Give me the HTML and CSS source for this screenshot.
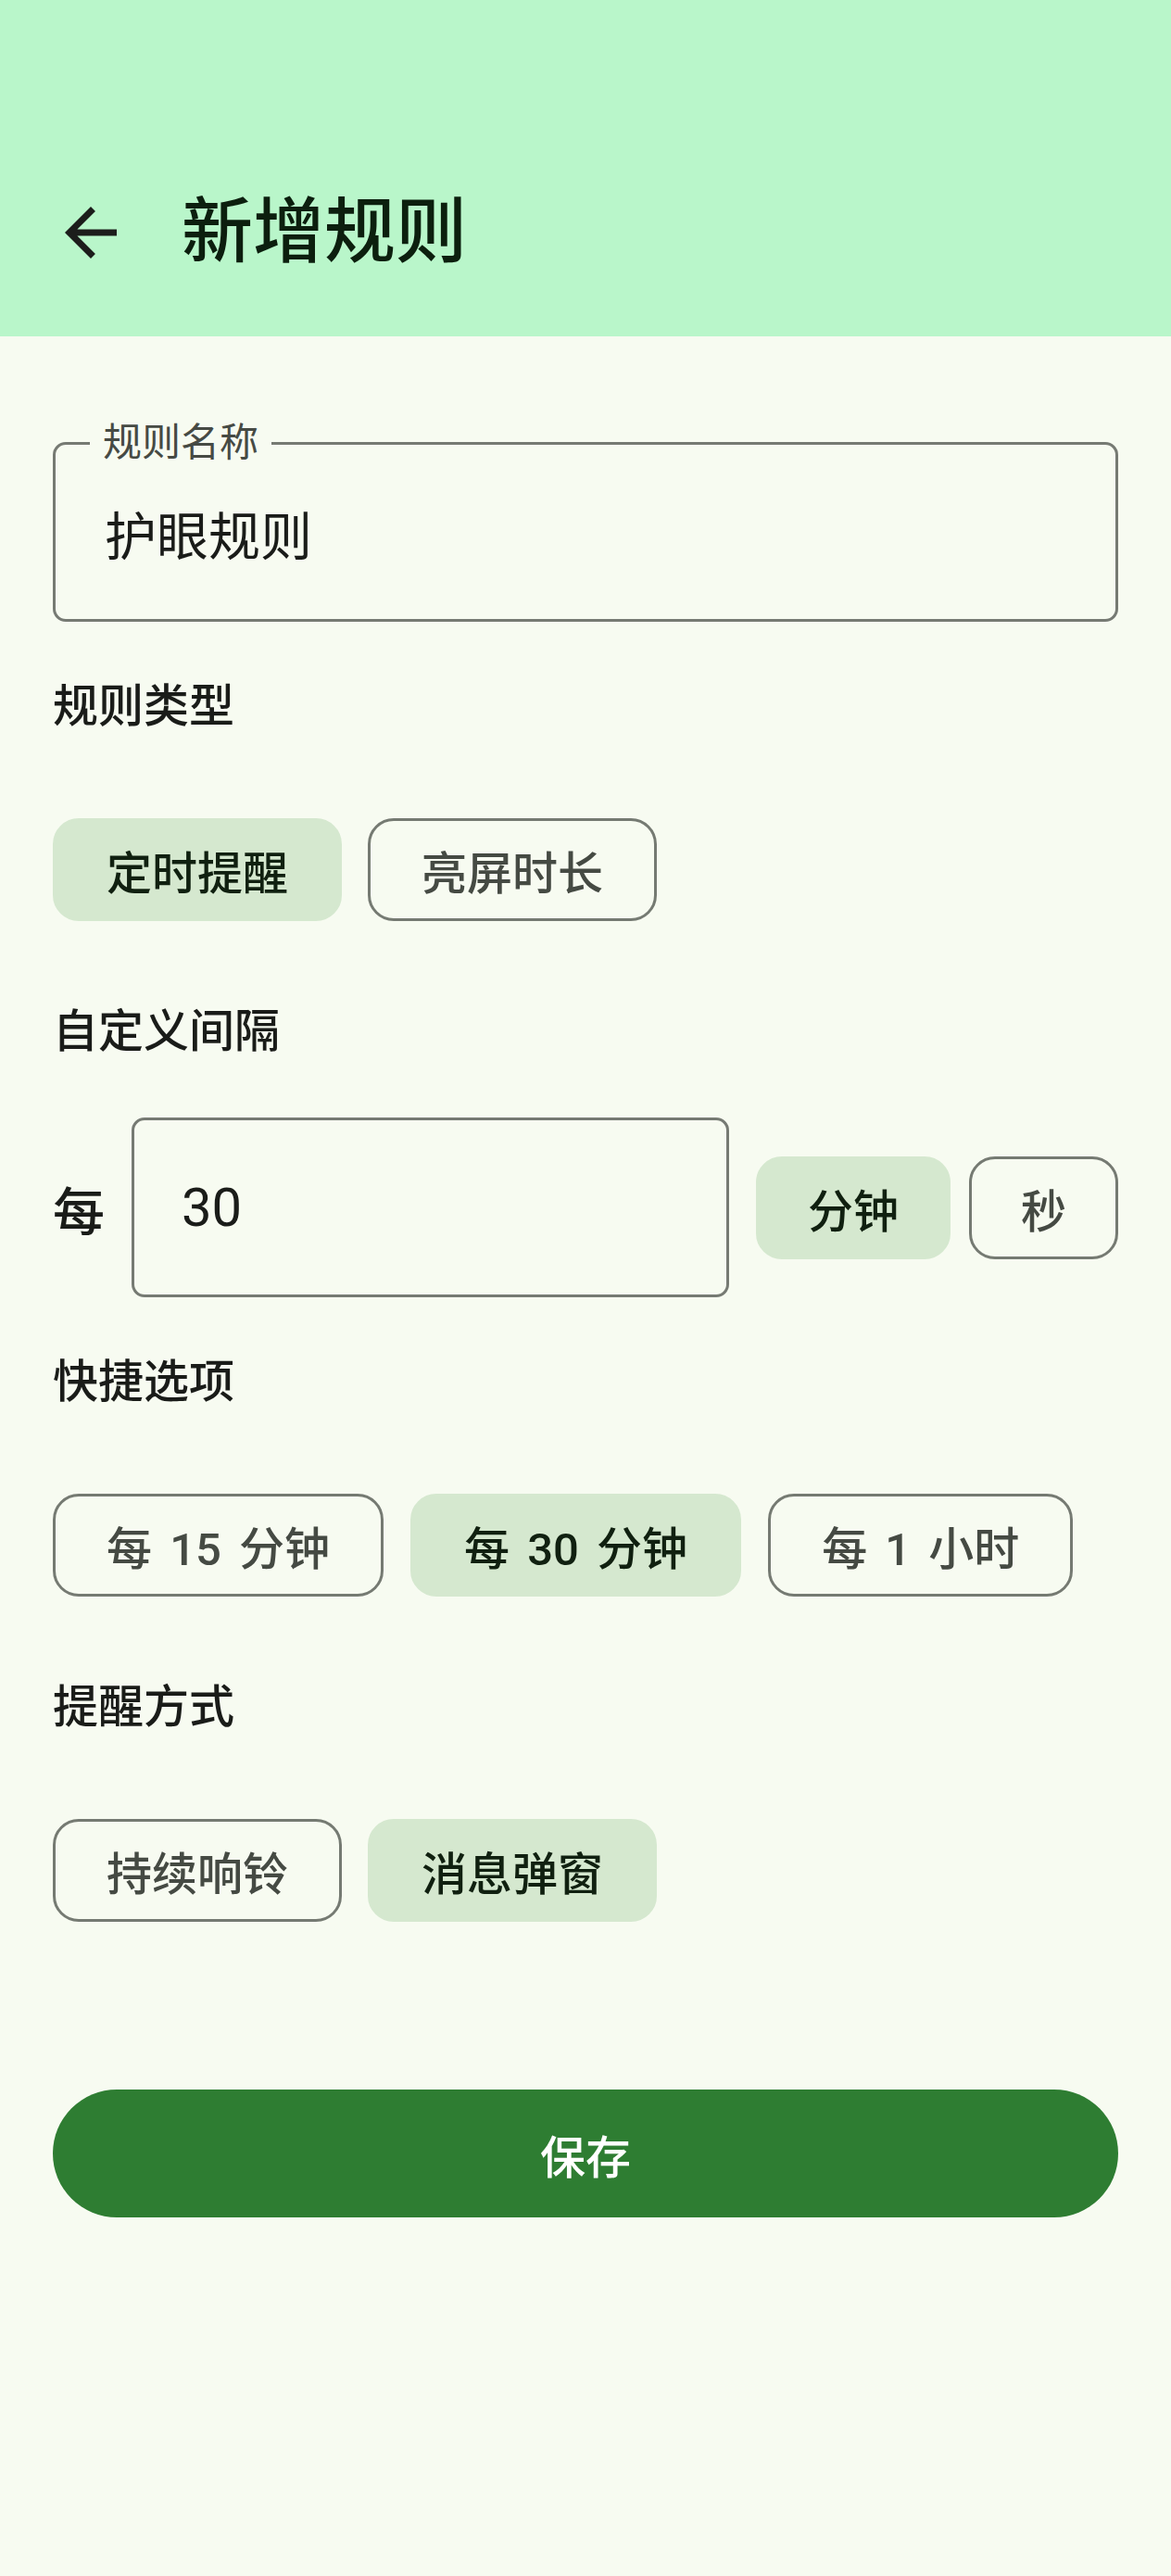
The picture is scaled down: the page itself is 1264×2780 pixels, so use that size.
FILE: index.html
```html
<!DOCTYPE html>
<html lang="zh-CN">
<head>
<meta charset="utf-8">
<title>新增规则</title>
<link rel="stylesheet" href="styles.css">
</head>
<body>
<div class="screen">
  <header class="topbar">
    <div class="statusbar"></div>
    <div class="appbar">
      <button class="nav-btn" aria-label="返回">
        <svg viewBox="0 0 24 24" width="84" height="84" aria-hidden="true">
          <path d="M20 11H7.83l5.59-5.59L12 4l-8 8 8 8 1.41-1.41L7.83 13H20v-2z" fill="currentColor"/>
        </svg>
      </button>
      <h1 class="title">新增规则</h1>
    </div>
  </header>

  <main class="content">
    <div class="outlined name-field">
      <span class="float-label">规则名称</span>
      <span class="field-text">护眼规则</span>
    </div>

    <div class="section-label">规则类型</div>
    <div class="chip-row">
      <span class="chip selected">定时提醒</span>
      <span class="chip">亮屏时长</span>
    </div>

    <div class="section-label">自定义间隔</div>
    <div class="interval-row">
      <span class="every">每</span>
      <div class="outlined number-field">
        <span class="field-text num">30</span>
      </div>
      <span class="chip selected unit unit-min">分钟</span>
      <span class="chip unit unit-sec">秒</span>
    </div>

    <div class="section-label">快捷选项</div>
    <div class="chip-row quick">
      <span class="chip">每 15 分钟</span>
      <span class="chip selected">每 30 分钟</span>
      <span class="chip">每 1 小时</span>
    </div>

    <div class="section-label">提醒方式</div>
    <div class="chip-row">
      <span class="chip">持续响铃</span>
      <span class="chip selected">消息弹窗</span>
    </div>

    <button class="save-btn">保存</button>
  </main>
</div>
</body>
</html>
```

FILE: styles.css
```css
html, body {
  margin: 0;
  padding: 0;
  background: #f7fbf1;
}

body {
  font-family: Roboto, "Noto Sans CJK SC", "Noto Sans", sans-serif;
  color: #1a1c19;
}

.screen {
  width: 1264px;
  min-height: 2780px;
  background: #f7fbf1;
}

/* ---------- top bar ---------- */
.topbar {
  background: #b9f6ca;
  height: 363px;
  display: flex;
  flex-direction: column;
}

.statusbar {
  height: 138px;
}

.appbar {
  height: 225px;
  display: flex;
  align-items: center;
}

.nav-btn {
  margin-left: 56px;
  width: 84px;
  height: 84px;
  padding: 0;
  border: 0;
  background: transparent;
  color: #1c1d1b;
  display: flex;
  align-items: center;
  justify-content: center;
}

.nav-btn svg {
  display: block;
}

.title {
  margin: 0 0 0 56px;
  font-size: 77px;
  font-weight: 500;
  line-height: 100px;
  color: #0c1f0e;
}

/* ---------- content ---------- */
.content {
  padding: 114px 57px 0;
  display: flex;
  flex-direction: column;
  gap: 57px;
}

.outlined {
  position: relative;
  box-sizing: border-box;
  height: 194px;
  border: 3px solid #767a73;
  border-radius: 14px;
  display: flex;
  align-items: center;
}

.float-label {
  position: absolute;
  top: -27px;
  left: 37px;
  padding: 0 14px;
  background: #f7fbf1;
  font-size: 42px;
  line-height: 50px;
  color: #464a44;
}

.field-text {
  font-size: 56px;
  color: #1a1c19;
}

.field-text.num {
  font-size: 58px;
}

.name-field {
  padding-left: 53px;
}

.section-label {
  height: 70px;
  line-height: 70px;
  font-size: 49px;
  font-weight: 500;
  color: #1a1c19;
}

.chip-row {
  display: flex;
  align-items: center;
  gap: 28px;
  padding: 28px 0;
}

.chip-row.quick {
  gap: 29px;
}

.chip {
  box-sizing: border-box;
  height: 111px;
  padding: 0 55px;
  border: 3px solid #757a72;
  border-radius: 28px;
  display: inline-flex;
  align-items: center;
  font-size: 49px;
  font-weight: 500;
  color: #454a43;
  white-space: pre;
  word-spacing: 7px;
}

.chip.selected {
  background: #d5e8cf;
  border-color: #d5e8cf;
  color: #102010;
}

/* ---------- interval row ---------- */
.interval-row {
  display: flex;
  align-items: center;
}

.every {
  font-size: 56px;
  font-weight: 500;
  margin-right: 29px;
}

.number-field {
  flex: 1;
  padding-left: 51px;
}

.chip.unit {
  padding: 0 53px;
}

.unit-min {
  margin-left: 29px;
}

.unit-sec {
  margin-left: 20px;
}

/* ---------- save ---------- */
.save-btn {
  margin-top: 96px;
  height: 138px;
  border: 0;
  border-radius: 69px;
  background: #2e7d32;
  color: #ffffff;
  font-family: Roboto, "Noto Sans CJK SC", sans-serif;
  font-size: 49px;
  font-weight: 500;
}
```
